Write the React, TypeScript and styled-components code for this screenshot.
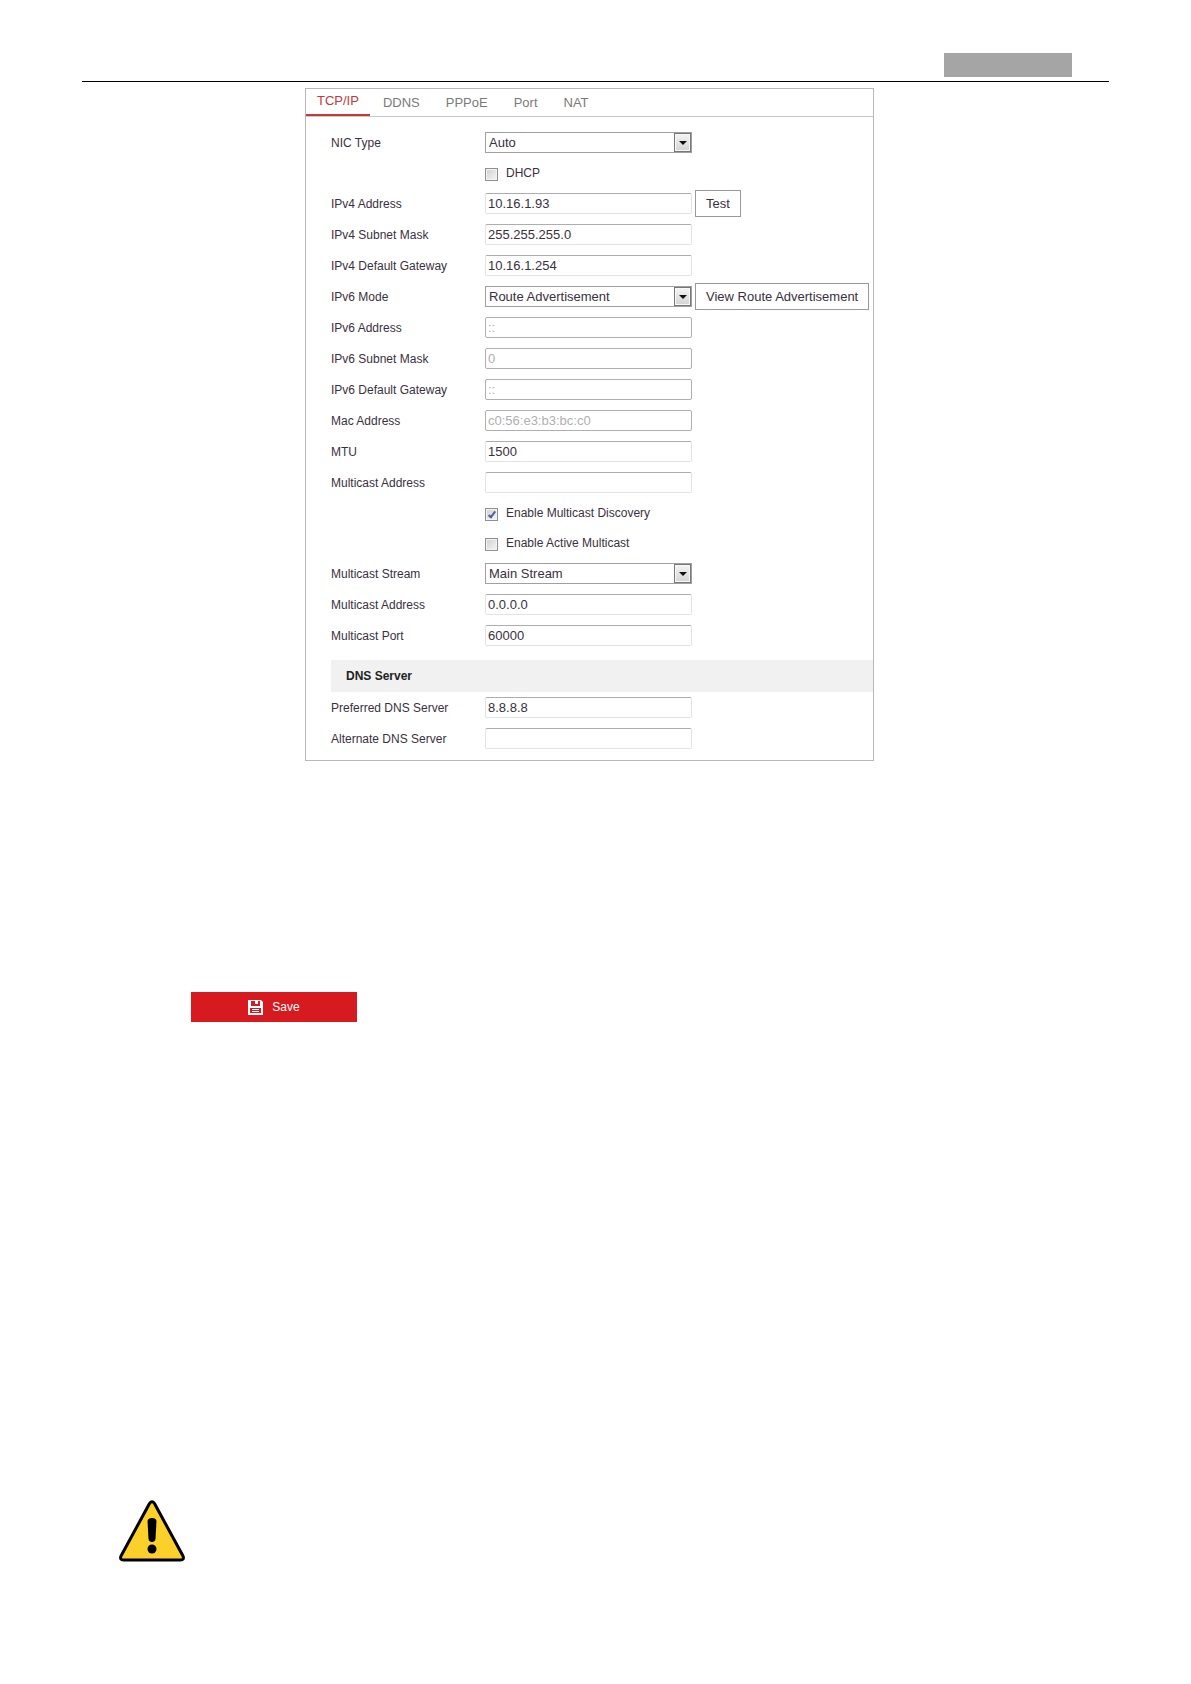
import React, { useState } from "react";
import styled, { createGlobalStyle, css } from "styled-components";

const GlobalStyle = createGlobalStyle`
  *, *::before, *::after { box-sizing: border-box; }
  body {
    margin: 0;
    background: #fff;
    color: #3a3040;
    font-family: "Liberation Sans", Arial, sans-serif;
    font-size: 13px;
  }
  button, input, select { font-family: inherit; }
`;

const Sheet = styled.main`
  display: flex;
  flex-direction: column;
  padding: 53px 82px 122px;
`;

const PageHeader = styled.header`
  display: flex;
  justify-content: flex-end;
  padding: 0 37px 4px 0;
  border-bottom: 1px solid #000;
`;

const HeaderBlock = styled.div`
  width: 128px;
  height: 24px;
  background: #a5a5a5;
`;

const Figure = styled.section`
  display: flex;
  justify-content: center;
  padding: 6px 12px 0 0;
`;

const Panel = styled.form`
  width: 100%;
  max-width: 569px;
  padding-bottom: 6px;
  border: 1px solid #b8b8b8;
`;

const TabBar = styled.div`
  display: flex;
  height: 28px;
  border-bottom: 1px solid #c8c8c8;
`;

const Tab = styled.button<{ $active: boolean }>`
  padding: 0 13px;
  border: 0;
  background: none;
  color: #7a7a7a;
  font-size: 13px;
  line-height: 26px;
  cursor: pointer;
  ${({ $active }) =>
    $active &&
    css`
      padding: 0 11px 2px;
      border-bottom: 2px solid #c8373b;
      color: #c8373b;
      line-height: 22px;
    `}
`;

const Fields = styled.div`
  display: flex;
  flex-direction: column;
  padding: 10px 0 9px 25px;
`;

const Row = styled.div<{ $short?: boolean }>`
  display: grid;
  grid-template-columns: 154px 207px auto;
  align-items: center;
  justify-content: start;
  height: ${({ $short }) => ($short ? 30 : 31)}px;
`;

const Label = styled.label`
  font-size: 12px;
`;

const TextBox = styled.input`
  width: 100%;
  height: 21px;
  padding: 0 2px;
  border: 1px solid #e2e3ea;
  border-top-color: #abadb3;
  border-radius: 2px;
  background: #fff;
  color: #3a3040;
  font-size: 13px;
  &:disabled {
    border-color: #afafaf;
    color: #b0b0b0;
  }
`;

const SelectBox = styled.div`
  position: relative;
  height: 21px;
`;

const Select = styled.select`
  width: 100%;
  height: 21px;
  padding: 0 20px 0 3px;
  border: 1px solid #a0a0a0;
  border-radius: 0;
  appearance: none;
  background: #fff;
  color: #3a3040;
  font-size: 13px;
`;

const SelectArrow = styled.span`
  position: absolute;
  top: 1px;
  right: 1px;
  display: grid;
  place-items: center;
  width: 17px;
  height: 19px;
  border: 1px solid #777;
  background: linear-gradient(#f4f4f4, #d4d4d4);
  box-shadow: inset 0 0 0 1px #f8f8f8;
  pointer-events: none;
`;

const ActionButton = styled.button`
  height: 27px;
  margin-left: 3px;
  padding: 0 10px;
  border: 1px solid #999;
  background: #fff;
  color: #3a3040;
  font-size: 13px;
  white-space: nowrap;
`;

const CheckLabel = styled.label`
  grid-column: 2 / -1;
  display: flex;
  align-items: center;
  gap: 8px;
  font-size: 12px;
`;

const CheckBox = styled.input`
  display: grid;
  place-items: center;
  width: 13px;
  height: 13px;
  margin: 2px 0 0;
  border: 1px solid #8e8f8f;
  appearance: none;
  background: linear-gradient(135deg, #cfcfcf, #f6f6f6);
  box-shadow: inset 0 0 0 1px #f4f4f4;
  &:checked::after {
    content: "";
    width: 4px;
    height: 8px;
    border: solid #4c5f9b;
    border-width: 0 2px 2px 0;
    transform: rotate(38deg);
  }
`;

const SectionTitle = styled.h2`
  margin: 0 0 0 25px;
  padding-left: 15px;
  background: #f1f1f1;
  color: #222;
  font-size: 12px;
  line-height: 32px;
`;

const DnsFields = styled.div`
  padding-left: 25px;
`;

const SaveButton = styled.button`
  display: flex;
  align-items: center;
  justify-content: center;
  gap: 9px;
  width: 166px;
  height: 30px;
  margin: 231px 0 0 109px;
  border: 0;
  background: #d71920;
  color: #fff;
  font-size: 12px;
`;

const WarningIcon = styled.svg`
  width: 68px;
  height: 64px;
  margin: 477px 0 0 36px;
`;

type Field = {
  id: string;
  label: string;
  kind: "text" | "select" | "check";
  value?: string;
  disabled?: boolean;
  checked?: boolean;
  action?: string;
};

const tabs = ["TCP/IP", "DDNS", "PPPoE", "Port", "NAT"];

const networkFields: Field[] = [
  { id: "nic", label: "NIC Type", kind: "select", value: "Auto" },
  { id: "dhcp", label: "DHCP", kind: "check" },
  { id: "ip4", label: "IPv4 Address", kind: "text", value: "10.16.1.93", action: "Test" },
  { id: "mask4", label: "IPv4 Subnet Mask", kind: "text", value: "255.255.255.0" },
  { id: "gateway4", label: "IPv4 Default Gateway", kind: "text", value: "10.16.1.254" },
  { id: "mode6", label: "IPv6 Mode", kind: "select", value: "Route Advertisement", action: "View Route Advertisement" },
  { id: "ip6", label: "IPv6 Address", kind: "text", value: "::", disabled: true },
  { id: "mask6", label: "IPv6 Subnet Mask", kind: "text", value: "0", disabled: true },
  { id: "gateway6", label: "IPv6 Default Gateway", kind: "text", value: "::", disabled: true },
  { id: "mac", label: "Mac Address", kind: "text", value: "c0:56:e3:b3:bc:c0", disabled: true },
  { id: "mtu", label: "MTU", kind: "text", value: "1500" },
  { id: "multicast", label: "Multicast Address", kind: "text" },
  { id: "discovery", label: "Enable Multicast Discovery", kind: "check", checked: true },
  { id: "active", label: "Enable Active Multicast", kind: "check" },
  { id: "stream", label: "Multicast Stream", kind: "select", value: "Main Stream" },
  { id: "streamAddress", label: "Multicast Address", kind: "text", value: "0.0.0.0" },
  { id: "streamPort", label: "Multicast Port", kind: "text", value: "60000" },
];

const dnsFields: Field[] = [
  { id: "dns1", label: "Preferred DNS Server", kind: "text", value: "8.8.8.8" },
  { id: "dns2", label: "Alternate DNS Server", kind: "text" },
];

function FieldRow({ field }: { field: Field }) {
  const { id, label, kind, value, disabled, checked, action } = field;
  if (kind === "check") {
    return (
      <Row $short>
        <CheckLabel htmlFor={id}>
          <CheckBox id={id} type="checkbox" defaultChecked={checked} />
          {label}
        </CheckLabel>
      </Row>
    );
  }
  return (
    <Row>
      <Label htmlFor={id}>{label}</Label>
      {kind === "select" ? (
        <SelectBox>
          <Select id={id} defaultValue={value}>
            <option>{value}</option>
          </Select>
          <SelectArrow>
            <svg width="8" height="4" viewBox="0 0 8 4" aria-hidden="true">
              <path d="M0 0h8L4 4z" fill="#111" />
            </svg>
          </SelectArrow>
        </SelectBox>
      ) : (
        <TextBox id={id} type="text" defaultValue={value} disabled={disabled} />
      )}
      {action && <ActionButton type="button">{action}</ActionButton>}
    </Row>
  );
}

export default function App() {
  const [activeTab, setActiveTab] = useState(tabs[0]);
  return (
    <>
      <GlobalStyle />
      <Sheet>
        <PageHeader>
          <HeaderBlock />
        </PageHeader>
        <Figure>
          <Panel id="network" onSubmit={(e) => e.preventDefault()}>
            <TabBar role="tablist">
              {tabs.map((name) => (
                <Tab
                  key={name}
                  type="button"
                  role="tab"
                  aria-selected={name === activeTab}
                  $active={name === activeTab}
                  onClick={() => setActiveTab(name)}
                >
                  {name}
                </Tab>
              ))}
            </TabBar>
            <Fields>
              {networkFields.map((f) => (
                <FieldRow key={f.id} field={f} />
              ))}
            </Fields>
            <SectionTitle>DNS Server</SectionTitle>
            <DnsFields>
              {dnsFields.map((f) => (
                <FieldRow key={f.id} field={f} />
              ))}
            </DnsFields>
          </Panel>
        </Figure>
        <SaveButton type="submit" form="network">
          <svg width="15" height="15" viewBox="0 0 15 15" aria-hidden="true">
            <path
              fill="#fff"
              fillRule="evenodd"
              d="M0 0h13l2 2v13H0zM3 1v5h9V1h-2v3H7V1zM2 8v5h11V8zM4 9h7v1H4zM4 11h7v1H4z"
            />
          </svg>
          Save
        </SaveButton>
        <WarningIcon viewBox="0 0 68 64" role="img" aria-label="Warning">
          <path
            d="M31.500 4.500Q34 1 36.500 4.500L65 57Q66.500 61 62.500 61H5.500Q1.500 61 3 57Z"
            fill="#fbd02a"
            stroke="#000"
            strokeWidth="3"
            strokeLinejoin="round"
          />
          <path d="M29.500 22Q30 19 34 19T38.500 22L37.500 40Q37 43 34 43T30.500 40Z" />
          <circle cx="34" cy="50" r="4.500" />
        </WarningIcon>
      </Sheet>
    </>
  );
}
